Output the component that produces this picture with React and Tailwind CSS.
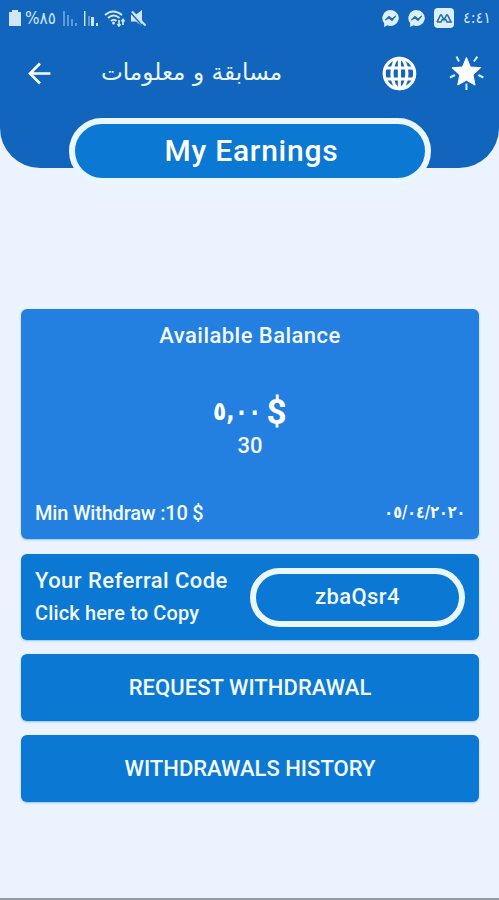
import React from "react";

function StatusBar() {
  return (
    <div className="flex h-9 items-center justify-between pl-2 pr-2 font-['DejaVu_Sans',sans-serif] text-[#cfe6fb]">
      <div className="flex items-center">
        <svg width="14" height="18" viewBox="0 0 14 18" fill="currentColor">
          <path d="M4 1h6v2h2.500q.5 0 .5.500v13q0 .5-.5.500h-11q-.5 0-.5-.5v-13q0-.5.5-.5H4z" />
        </svg>
        <span className="ml-[3px] w-[33px] origin-left scale-x-90 whitespace-nowrap text-[17px] leading-none">%٨٥</span>
        <svg className="ml-[4px]" width="38" height="18" viewBox="0 0 38 18" fill="currentColor">
          <g opacity=".42">
            <path d="M1 2h2v15H1zM5 6h2v11H5zM9 10h2v7H9zM13 14h2v3h-2z" />
            <path d="M22 2h2v15h-2zM26 7h2v10h-2z" />
          </g>
          <path d="M22 2h1v15h-1zM29 8h3v9h-3zM34 14h2v3h-2z" />
        </svg>
        <svg className="ml-[4px]" width="22" height="18" viewBox="0 0 22 18" fill="none" stroke="currentColor" strokeWidth="2">
          <path d="M1 6q8-7 17 0M4 9q5.500-5 11.500 0M7 12q3-2.500 5.500 0" />
          <circle cx="9.500" cy="14" r="1.500" fill="currentColor" stroke="none" />
          <path d="M15 11v6M13.500 15l1.500 2 1.500-2M19 16v-5.500M17.500 12.500l1.500-2 1.500 2" strokeWidth="1.700" />
        </svg>
        <svg className="ml-1" width="18" height="18" viewBox="0 0 18 18" fill="currentColor">
          <path d="M1 5.500h5l6-4.500v16l-6-4.500H1z" />
          <path d="M1 4l12 13.500" stroke="#1265bc" strokeWidth="1.300" />
          <path d="M2 2.500l13.500 14" stroke="currentColor" strokeWidth="2" />
        </svg>
      </div>
      <div className="flex items-center">
        <Messenger />
        <Messenger />
        <svg width="20" height="20" viewBox="0 0 20 20">
          <rect width="20" height="20" rx="4" fill="#dceffd" />
          <path d="M3 14l3.500-7h1L10 12l2.500-5h1L17 14h-4l-1.500-3M3 14h4l1.500-3" fill="none" stroke="#286d9f" strokeWidth="1.600" />
        </svg>
        <span className="ml-[9px] w-7 origin-left scale-x-90 whitespace-nowrap text-base leading-none">٤:٤١</span>
      </div>
    </div>
  );
}

function Messenger() {
  return (
    <svg className="mr-2 -ml-px" width="19" height="19" viewBox="0 0 18 18">
      <path d="M9 1a8 7.500 0 1 1-3 14.500L3 17v-3.500A7.700 7.700 0 0 1 9 1z" fill="#dceffd" />
      <path d="M4 10.500l3.500-3.500 3 2.500L14 6.500l-3.500 4.500-3-2.500z" fill="#286d9f" stroke="#286d9f" />
    </svg>
  );
}

function TitleBar() {
  return (
    <div className="flex h-[74px] items-center pl-7 pr-[15px] text-white">
      <svg width="23" height="23" viewBox="0 0 23 23" fill="none" stroke="currentColor" strokeWidth="2.600">
        <path d="M22.500 11.500H2.500M12 1.500l-10 10 10 10" />
      </svg>
      <h1 dir="rtl" className="ml-[50px] w-[182px] whitespace-nowrap pb-0.5 font-['DejaVu_Sans',sans-serif] text-[23.200px] leading-none text-[#eaf6ff]">
        مسابقة و معلومات
      </h1>
      <svg className="ml-[99px]" width="36" height="36" viewBox="0 0 36 36" fill="none" stroke="currentColor" strokeWidth="3.200">
        <circle cx="18.500" cy="18.500" r="15.300" />
        <ellipse cx="18.500" cy="18.500" rx="7.500" ry="15.300" />
        <path d="M18.500 3v31M5 13h27M5 24h27" />
      </svg>
      <svg className="ml-[31px]" width="36" height="36" viewBox="0 0 36 36">
        <path d="M18.500 2.500l4 9.500 10.200.7-7.600 7.300 2 10.100L18.500 25.200 9.800 30.100l2-10.100-7.800-7.300L14.500 12z" fill="white" stroke="white" />
        <path d="M8.500 1.500l2.500 5M29.500 1.500l-3.500 5M2 22.500l5-2.500M35.500 22.500l-5-2.500M18.500 28.500V35" stroke="#c9f2ff" strokeWidth="2" />
      </svg>
    </div>
  );
}

export default function App() {
  return (
    <main className="flex h-[900px] w-[499px] flex-col overflow-hidden border-b-2 border-[#929b9e] bg-[#ebf3fe] font-[Roboto,sans-serif] font-medium text-[#f2faff]">
      <header className="h-[168px] shrink-0 rounded-b-[40px] bg-[#1265bc]">
        <StatusBar />
        <TitleBar />
        <div className="mx-auto mt-2 flex h-[66px] w-[362px] items-center justify-center rounded-full border-6 border-[#ebf7ff] bg-[#0b78d4] pb-0.5 text-[30px] text-white">
          <span className="ml-1 tracking-[0.750px]">My Earnings</span>
        </div>
      </header>

      <div className="mt-[141px] flex flex-col pl-[21px] pr-5">
        <section className="flex h-[230px] flex-col rounded-md bg-[#2380e0] px-[14px] shadow-[0_1px_2px_#8fc4ed]">
          <h2 className="mt-3 text-center text-[22px] leading-[30px] tracking-[0.450px]">Available Balance</h2>
          <div className="mt-11 flex h-9 items-center justify-center text-white">
            <span className="w-[53px] origin-left scale-x-[0.84] pb-[5px] font-['DejaVu_Sans',sans-serif] text-[26px] font-bold leading-none">٥,٠٠</span>
            <span className="pb-0.5 text-[35px] font-bold leading-none">$</span>
          </div>
          <div className="text-center text-[22px] leading-[30px]">30</div>
          <div className="mt-auto mb-[10px] flex h-8 items-center justify-between">
            <span className="text-xl leading-none tracking-[-0.200px]">Min Withdraw :10 $</span>
            <span className="origin-right scale-x-[0.85] pb-0.5 font-['DejaVu_Sans',sans-serif] text-[17px] font-bold leading-none">٠٥/٠٤/٢٠٢٠</span>
          </div>
        </section>

        <section className="mt-[15px] flex h-[86px] items-center justify-between rounded-md bg-[#0b78d4] px-[14px] shadow-[0_1px_2px_#8fc4ed]">
          <div className="flex flex-col whitespace-nowrap">
            <span className="text-[22px] leading-8 tracking-[0.450px]">Your Referral Code</span>
            <span className="text-xl leading-8 tracking-[0.150px]">Click here to Copy</span>
          </div>
          <div className="flex h-[59px] w-[215px] items-center justify-center rounded-full border-6 border-[#ebf7ff] pb-0.5 text-[22px] tracking-[0.400px]">
            zbaQsr4
          </div>
        </section>

        <button className="mt-[14px] h-[67px] rounded-md bg-[#0b78d4] text-[22px] tracking-[0.050px] shadow-[0_1px_2px_#8fc4ed]">REQUEST WITHDRAWAL</button>
        <button className="mt-[14px] h-[67px] rounded-md bg-[#0b78d4] text-[22px] shadow-[0_1px_2px_#8fc4ed]">WITHDRAWALS HISTORY</button>
      </div>
    </main>
  );
}
